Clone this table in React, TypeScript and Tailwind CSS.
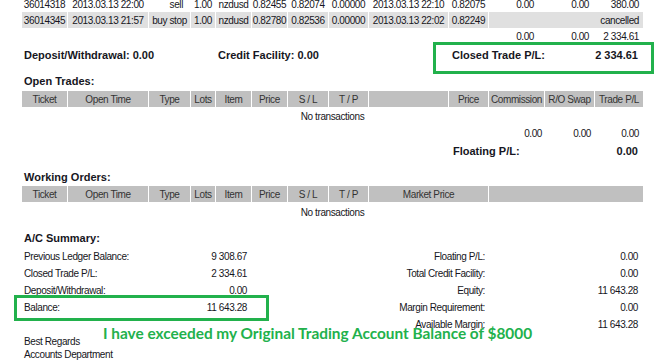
import React from "react";

// column grid shared by all statement tables (13 columns, 1px white gutters)
const COLS =
  "grid grid-cols-[45px_80px_41px_24px_35px_35px_40px_39px_79px_39px_55px_49px_48px] gap-x-px";

const openHeaders = ["Ticket", "Open Time", "Type", "Lots", "Item", "Price", "S / L", "T / P", "", "Price", "Commission", "R/O Swap", "Trade P/L"];
const orderHeaders = ["Ticket", "Open Time", "Type", "Lots", "Item", "Price", "S / L", "T / P"];

const closedRow = ["36014318", "2013.03.13 22:00", "sell", "1.00", "nzdusd", "0.82455", "0.82074", "0.00000", "2013.03.13 22:10", "0.82075"];
const cancelledRow = ["36014345", "2013.03.13 21:57", "buy stop", "1.00", "nzdusd", "0.82780", "0.82536", "0.00000", "2013.03.13 22:02", "0.82249"];

const summaryLeft = [
  ["Previous Ledger Balance:", "9 308.67"],
  ["Closed Trade P/L:", "2 334.61"],
  ["Deposit/Withdrawal:", "0.00"],
  ["Balance:", "11 643.28"],
  ["", ""],
];

const summaryRight = [
  ["Floating P/L:", "0.00"],
  ["Total Credit Facility:", "0.00"],
  ["Equity:", "11 643.28"],
  ["Margin Requirement:", "0.00"],
  ["Available Margin:", "11 643.28"],
];

function HeaderRow({ cells, extra }: { cells: string[]; extra?: React.ReactNode }) {
  return (
    <div className={`${COLS} ml-[22px] h-[16px] text-[#333]`}>
      {cells.map((c, i) => (
        <div key={i} className="bg-[#c0c0c0] flex items-center justify-center whitespace-nowrap">
          {c}
        </div>
      ))}
      {extra}
    </div>
  );
}

function Title({ children }: { children: React.ReactNode }) {
  return <div className="pl-[24px] h-[14px] leading-[14px] font-bold text-[11px] tracking-normal">{children}</div>;
}

export default function App() {
  return (
    <div className="relative w-[660px] h-[362px] overflow-hidden bg-white text-[#161622] text-[10px] tracking-[-0.4px] font-['Liberation_Sans',Arial,sans-serif]">
      <div className="-mt-[4px]">
        {/* Closed transactions (tail) */}
        <div className={`${COLS} ml-[22px] h-[16px]`}>
          {closedRow.map((c, i) => (
            <div key={i} className={`flex items-center whitespace-nowrap ${i === 2 ? "justify-end pr-[7px]" : "justify-center"}`}>
              {c}
            </div>
          ))}
          <div className="flex items-center justify-end pr-[10px]">0.00</div>
          <div className="flex items-center justify-end pr-[5px]">0.00</div>
          <div className="flex items-center justify-end pr-[4px]">380.00</div>
        </div>
        <div className={`${COLS} ml-[22px] h-[16px]`}>
          {cancelledRow.map((c, i) => (
            <div key={i} className="bg-[#e0e0e0] flex items-center justify-center whitespace-nowrap">
              {c}
            </div>
          ))}
          <div className="col-span-3 bg-[#e0e0e0] flex items-center justify-end pr-[4px]">cancelled</div>
        </div>
        <div className={`${COLS} ml-[22px] h-[16px] pt-[1px]`}>
          <div className="col-span-10" />
          <div className="flex items-center justify-end pr-[10px]">0.00</div>
          <div className="flex items-center justify-end pr-[5px]">0.00</div>
          <div className="flex items-center justify-end pr-[4px]">2 334.61</div>
        </div>

        {/* Totals line */}
        <div className="grid grid-cols-[194px_234px_186px] pl-[24px] h-[22px] items-center font-bold text-[11px] tracking-normal">
          <div>Deposit/Withdrawal: 0.00</div>
          <div>Credit Facility: 0.00</div>
          <div className="flex justify-between">
            <span>Closed Trade P/L:</span>
            <span>2 334.61</span>
          </div>
        </div>

        {/* Open trades */}
        <div className="mt-[8px]">
          <Title>Open Trades:</Title>
        </div>
        <div className="mt-[3px]">
          <HeaderRow cells={openHeaders} />
        </div>
        <div className="ml-[22px] w-[621px] h-[16px] mt-[1px] flex items-center justify-center">No transactions</div>
        <div className={`${COLS} ml-[22px] h-[16px] mt-[1px]`}>
          <div className="col-span-10" />
          <div className="flex items-center justify-end pr-[2px]">0.00</div>
          <div className="flex items-center justify-end pr-[3px]">0.00</div>
          <div className="flex items-center justify-end pr-[4px]">0.00</div>
        </div>
        <div className="ml-[453px] w-[185px] h-[16px] mt-[2px] flex items-center justify-between font-bold text-[11px] tracking-normal">
          <span>Floating P/L:</span>
          <span>0.00</span>
        </div>

        {/* Working orders */}
        <div className="mt-[11px]">
          <Title>Working Orders:</Title>
        </div>
        <div className="mt-[2px]">
          <HeaderRow
            cells={orderHeaders}
            extra={
              <>
                <div className="col-span-2 bg-[#c0c0c0] flex items-center justify-center text-[#333]">Market Price</div>
                <div className="col-span-3 bg-[#c0c0c0]" />
              </>
            }
          />
        </div>
        <div className="ml-[22px] w-[621px] h-[16px] mt-[2px] flex items-center justify-center">No transactions</div>

        {/* A/C summary */}
        <div className="mt-[11px]">
          <Title>A/C Summary:</Title>
        </div>
        <div className="mt-[3px] pl-[24px] grid grid-cols-[136px_87px_238px_153px] auto-rows-[17px] items-center">
          {summaryRight.map((r, i) => (
            <React.Fragment key={i}>
              <div className="whitespace-nowrap">{summaryLeft[i][0]}</div>
              <div className="text-right">{summaryLeft[i][1]}</div>
              <div className="text-right whitespace-nowrap">{r[0]}</div>
              <div className="text-right">{r[1]}</div>
            </React.Fragment>
          ))}
        </div>
        <div className="pl-[24px] mt-[2px] leading-[14px]">Best Regards</div>
        <div className="pl-[24px] leading-[12px]">Accounts Department</div>
      </div>

      {/* annotation overlays */}
      <div className="absolute left-[433px] top-[42px] w-[221px] h-[32px] border-[3px] border-[#22b14c]" />
      <div className="absolute left-[14px] top-[295px] w-[255px] h-[26px] border-[3px] border-[#22b14c]" />
      <div className="absolute left-[103px] top-[323px] whitespace-nowrap font-['Lato',sans-serif] font-bold text-[15.4px] leading-[20px] tracking-normal text-[#22b14c]">
        I have exceeded my Original Trading Account Balance of $8000
      </div>
    </div>
  );
}
